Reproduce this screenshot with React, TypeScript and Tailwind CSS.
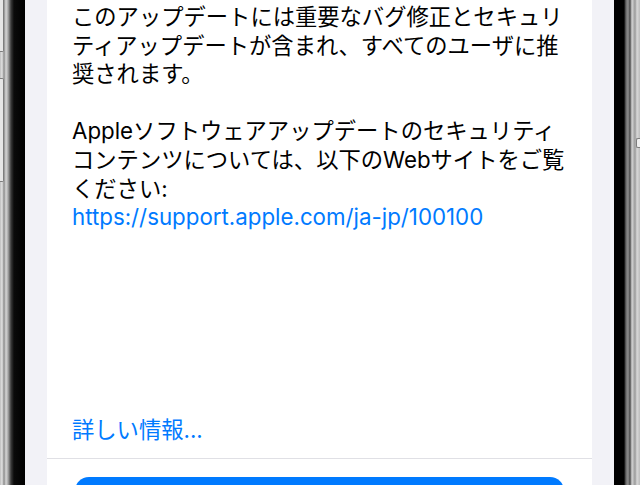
const font = {
  fontFamily: 'Inter, "Noto Sans CJK JP", sans-serif',
};

const LeftFrame = () => (
  <div className="relative w-[25px] shrink-0 bg-[linear-gradient(to_right,#bdbdbd_0px,#e2e2e2_2px,#8c8c8c_4px,#d6d6d6_6px,#a8a8a8_8px,#3a3a3a_11px,#0a0a0a_14px,#000_25px)]">
    {/* side buttons */}
    <div className="absolute left-0 top-[-10px] h-[62px] w-[4px] rounded-r-[2px] border border-l-0 border-[#7d7d7d] bg-[#e6e6e6]" />
    <div className="absolute left-0 top-[78px] h-[104px] w-[4px] rounded-r-[2px] border border-l-0 border-[#7d7d7d] bg-[#e6e6e6]" />
  </div>
);

const RightFrame = () => (
  <div className="relative w-[26px] shrink-0 bg-[linear-gradient(to_right,#000_0px,#000_10px,#6a6a6a_12px,#8f8f8f_14px,#4a4a4a_16px,#d4d4d4_18px,#9a9a9a_21px,#d8d8d8_23px,#bcbcbc_26px)]">
    <div className="absolute right-0 top-[138px] h-[10px] w-[4px] rounded-l-[2px] border border-r-0 border-[#7d7d7d] bg-[#eeeeee]" />
  </div>
);

export default function App() {
  return (
    <div className="flex h-[485px] w-[640px] overflow-hidden bg-black" style={font}>
      <LeftFrame />
      <div className="flex flex-1 bg-[#f2f2f7] px-[22px]">
        <div className="flex flex-1 flex-col bg-white">
          <div className="flex flex-1 flex-col px-[25px] pt-[3px] text-[22.3px] leading-[28.6px]">
            <p className="whitespace-nowrap text-black">
              このアップデートには重要なバグ修正とセキュリ
              <br />
              ティアップデートが含まれ、すべてのユーザに推
              <br />
              奨されます。
            </p>
            <p className="mt-[28.6px] whitespace-nowrap text-black">
              Appleソフトウェアアップデートのセキュリティ
              <br />
              コンテンツについては、以下のWebサイトをご覧
              <br />
              ください:
              <br />
              <a className="text-[#007aff]">https://support.apple.com/ja-jp/100100</a>
            </p>
            <a className="mt-auto mb-[13px] text-[#007aff]">詳しい情報...</a>
          </div>
          <div className="h-px bg-[#e0e0e5]" />
          <div className="h-[26px] shrink-0 overflow-hidden px-[28px] pt-[18px]">
            <div className="h-[50px] rounded-[14px] bg-[#007aff]" />
          </div>
        </div>
      </div>
      <RightFrame />
    </div>
  );
}
